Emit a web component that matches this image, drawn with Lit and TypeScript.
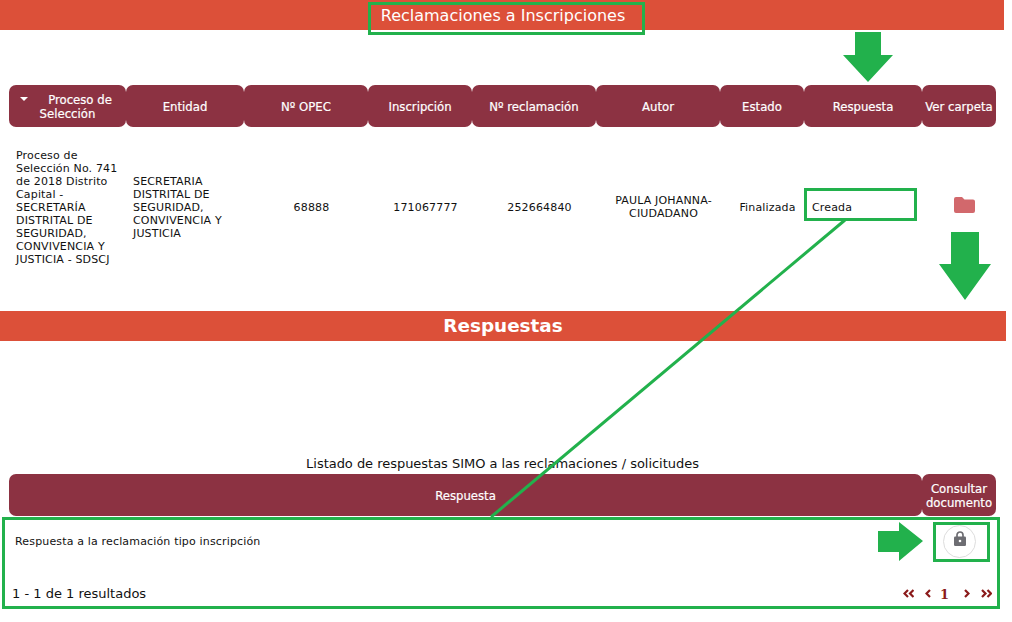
import { LitElement, html, css, svg } from "lit";
import { customElement } from "lit/decorators.js";

@customElement("app-root")
export class AppRoot extends LitElement {
  static styles = css`
    :host {
      display: block;
      position: relative;
      width: 1012px;
      height: 622px;
      overflow: hidden;
      background: #fff;
      font-family: "DejaVu Sans", Verdana, sans-serif;
      color: #111;
      font-size: 11px;
    }
    .bar {
      background: #dc5039;
      color: #fff;
      height: 30px;
      display: flex;
      align-items: center;
      justify-content: center;
      box-sizing: border-box;
    }
    .bar-top { width: 1004px; font-size: 16px; padding-left: 2px; }
    .bar-second { width: 1006px; font-size: 18.4px; font-weight: 700; padding-bottom: 2px; }
    .table { margin-left: 9px; width: 987px; }
    .first { margin-top: 55px; }
    .grid {
      display: grid;
      grid-template-columns: 117px 118px 124px 104px 124px 124px 84px 118px 74px;
    }
    .head > div {
      background: #8c3242;
      color: #fff;
      height: 42px;
      padding-top: 1px;
      box-sizing: border-box;
      border-radius: 7px;
      display: flex;
      align-items: center;
      justify-content: center;
      text-align: center;
      font-family: "DejaVu Sans Condensed", "DejaVu Sans", sans-serif;
      font-size: 13px;
      line-height: 14px;
      -webkit-text-stroke: 0.2px #fff;
    }
    .proc { position: relative; }
    .indent { margin-left: 25px; }
    .caret {
      position: absolute;
      left: 11px;
      top: 12px;
      width: 0;
      height: 0;
      border-left: 4px solid transparent;
      border-right: 4px solid transparent;
      border-top: 4px solid #fff;
    }
    .row {
      height: 184px;
      box-sizing: border-box;
      padding-bottom: 24px;
      align-items: center;
      line-height: 13px;
      font-size: 11px;
      letter-spacing: 0.16px;
    }
    .row > div { text-align: center; padding-left: 11px; }
    .row .l { text-align: left; padding-left: 7px; padding-right: 2px; }
    .row .creada { text-align: left; padding-left: 8px; }
    .folder { display: flex; justify-content: center; margin-top: -4px; }
    .caption {
      height: 19px;
      margin-top: 113px;
      margin-bottom: 1px;
      padding-right: 7px;
      text-align: center;
      font-size: 13px;
      letter-spacing: -0.03px;
      line-height: 19px;
    }
    .grid2 { display: grid; grid-template-columns: 913px 74px; }
    .row2 {
      display: flex;
      justify-content: space-between;
      align-items: center;
      height: 50px;
      padding-left: 6px;
      font-size: 11px;
      letter-spacing: 0.16px;
    }
    .lock {
      width: 33px;
      height: 33px;
      border: 1px solid #ddd;
      border-radius: 50%;
      display: flex;
      align-items: center;
      justify-content: center;
      margin-right: 20px;
      box-sizing: border-box;
    }
    .lock svg { margin-bottom: 5px; }
    .foot {
      display: flex;
      justify-content: space-between;
      align-items: center;
      margin-left: 3px;
      margin-top: 18px;
      font-size: 13px;
    }
    .pager { display: flex; align-items: center; color: #8b1a1a; font-weight: 700; gap: 11px; margin-right: 4px; }
    .pager b { font-family: "DejaVu Serif", serif; font-size: 13px; margin: 3px 4px 0 -2px; }
    .overlay { position: absolute; left: 0; top: 0; pointer-events: none; }
  `;

  private head(t: string) {
    return html`<div>${t}</div>`;
  }

  private chev(points: string[], w: number) {
    return html`<svg width=${w} height="9" viewBox="0 0 ${w} 9">
      ${points.map((p) => svg`<polyline points=${p} fill="none" stroke="#8b1a1a" stroke-width="2.2"></polyline>`)}
    </svg>`;
  }

  render() {
    return html`
      <div class="bar bar-top">Reclamaciones a Inscripciones</div>
      <div class="table first">
        <div class="grid head">
          <div class="proc"><i class="caret"></i><span><span class="indent">Proceso de</span><br />Selección</span></div>
          ${["Entidad", "Nº OPEC", "Inscripción", "Nº reclamación", "Autor", "Estado", "Respuesta", "Ver carpeta"].map((t) => this.head(t))}
        </div>
        <div class="grid row">
          <div class="l">Proceso de Selección No. 741 de 2018 Distrito Capital - SECRETARÍA DISTRITAL DE SEGURIDAD, CONVIVENCIA Y JUSTICIA - SDSCJ</div>
          <div class="l">SECRETARIA DISTRITAL DE SEGURIDAD, CONVIVENCIA Y JUSTICIA</div>
          <div>68888</div>
          <div>171067777</div>
          <div>252664840</div>
          <div>PAULA JOHANNA-CIUDADANO</div>
          <div>Finalizada</div>
          <div class="creada">Creada</div>
          <div class="folder">
            <svg width="21" height="16" viewBox="0 0 21 16"><path d="M2 0H8L10.5 2.5H19A2 2 0 0 1 21 4.5V14A2 2 0 0 1 19 16H2A2 2 0 0 1 0 14V2A2 2 0 0 1 2 0Z" fill="#d2686c"></path></svg>
          </div>
        </div>
      </div>
      <div class="bar bar-second">Respuestas</div>
      <div class="caption">Listado de respuestas SIMO a las reclamaciones / solicitudes</div>
      <div class="table">
        <div class="grid2 head">
          ${this.head("Respuesta")}
          <div>Consultar<br />documento</div>
        </div>
        <div class="row2">
          <span>Respuesta a la reclamación tipo inscripción</span>
          <span class="lock">
            <svg width="12" height="15" viewBox="0 0 12 15">
              <path d="M3 6V4A3 3 0 0 1 9 4V6" fill="none" stroke="#6d6d72" stroke-width="1.7"></path>
              <rect x="0" y="5.5" width="12" height="9.5" rx="1.2" fill="#6d6d72"></rect>
              <circle cx="6" cy="10" r="1.3" fill="#fff"></circle>
            </svg>
          </span>
        </div>
        <div class="foot">
          <span>1 - 1 de 1 resultados</span>
          <span class="pager">
            ${this.chev(["5,1 1.5,4.5 5,8", "10.5,1 7,4.5 10.5,8"], 11)}
            ${this.chev(["5,1 1.5,4.5 5,8"], 6)}
            <b>1</b>
            ${this.chev(["1,1 4.5,4.5 1,8"], 6)}
            ${this.chev(["1,1 4.5,4.5 1,8", "6.5,1 10,4.5 6.5,8"], 11)}
          </span>
        </div>
      </div>
      <svg class="overlay" width="1012" height="622" viewBox="0 0 1012 622">
        <g fill="none" stroke="#22b14c">
          <rect x="369.5" y="3.5" width="274" height="30" stroke-width="3"></rect>
          <rect x="805.5" y="189.5" width="110" height="30" stroke-width="3"></rect>
          <rect x="3.5" y="518.5" width="995" height="89" stroke-width="3"></rect>
          <rect x="934.5" y="523.5" width="54" height="37" stroke-width="3"></rect>
          <line x1="845" y1="220" x2="491" y2="517" stroke-width="3"></line>
        </g>
        <g fill="#22b14c">
          <polygon points="855,32 881,32 881,55 893,55 868,82 843,55 855,55"></polygon>
          <polygon points="951,232 979,232 979,264 991,264 965,300 939,264 951,264"></polygon>
          <polygon points="878,531 899,531 899,522 923,541 899,561 899,552 878,552"></polygon>
        </g>
      </svg>
    `;
  }
}
